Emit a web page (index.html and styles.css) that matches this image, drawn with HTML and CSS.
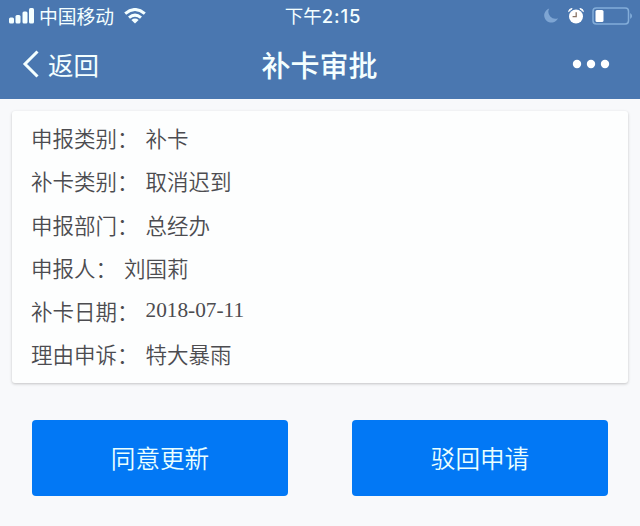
FILE: index.html
```
<!DOCTYPE html>
<html lang="zh-CN">
<head>
    <meta charset="utf-8">
    <title>补卡审批</title>
    <link rel="stylesheet" href="styles.css">
</head>
<body>
    <header class="header">
        <div class="status-bar">
            <div class="status-left">
                <svg class="signal" width="26" height="16" viewBox="0 0 26 16" fill="#f4ffff">
                    <rect x="0" y="9.5" width="5" height="6" rx="1.5"/>
                    <rect x="6.5" y="7" width="5" height="8.5" rx="1.5"/>
                    <rect x="13.5" y="3.5" width="5" height="12" rx="1.5"/>
                    <rect x="20" y="0" width="5" height="15.5" rx="1.5"/>
                </svg>
                <span class="carrier">中国移动</span>
                <svg class="wifi" width="22" height="16" viewBox="0 0 22 16" fill="none" stroke="#f4ffff" stroke-width="3">
                    <path d="M1.2 5.6 Q11 -2.6 20.8 5.6"/>
                    <path d="M5 9.6 Q11 4.6 17 9.6"/>
                    <path d="M7.4 11.9 Q11 9.2 14.6 11.9 L11 15.4 Z" fill="#f4ffff" stroke="none"/>
                </svg>
            </div>
            <div class="status-time">下午<b>2:15</b></div>
            <div class="status-right">
                <svg class="moon" width="15" height="15" viewBox="0 0 15 15">
                    <path d="M5.2 .5 A7.2 7.2 0 1 0 14 10.2 A7 7 0 0 1 5.2 .5 Z" fill="#7ea5d3"/>
                </svg>
                <svg class="alarm" width="16" height="16" viewBox="0 0 16 16">
                    <g fill="#fff">
                        <circle cx="8" cy="8.5" r="7"/>
                        <path d="M.6 3.6 Q.9 .6 4.2 .6 Z M15.4 3.6 Q15.1 .6 11.8 .6 Z" stroke="#fff" stroke-width="1" stroke-linejoin="round"/>
                    </g>
                    <path d="M8.2 4.2 V8.6 H4.6" fill="none" stroke="#8a7465" stroke-width="1.3"/>
                </svg>
                <svg class="battery" width="41" height="18" viewBox="0 0 41 18">
                    <rect x="1" y="1" width="35.5" height="16" rx="3.2" fill="none" stroke="#83add9" stroke-width="1.5"/>
                    <rect x="3.5" y="3" width="8" height="12" rx="1.5" fill="#fff"/>
                    <path d="M38.2 6 Q42 9 38.2 12 Z" fill="#83add9"/>
                </svg>
            </div>
        </div>
        <nav class="nav-bar">
            <a class="back">
                <svg width="17" height="28" viewBox="0 0 17 28">
                    <path d="M15.5 1.5 L3 14 L15.5 26.5" fill="none" stroke="#f4ffff" stroke-width="3"/>
                </svg>
                <span>返回</span>
            </a>
            <h1 class="title">补卡审批</h1>
            <svg class="more" width="38" height="10" viewBox="0 0 38 10" fill="#fff">
                <circle cx="5" cy="5" r="4.2"/>
                <circle cx="19" cy="5" r="4.2"/>
                <circle cx="33" cy="5" r="4.2"/>
            </svg>
        </nav>
    </header>

    <main>
        <div class="card">
            <div class="row"><span class="label">申报类别：</span><span>补卡</span></div>
            <div class="row"><span class="label">补卡类别：</span><span>取消迟到</span></div>
            <div class="row"><span class="label">申报部门：</span><span>总经办</span></div>
            <div class="row"><span class="label">申报人：</span><span>刘国莉</span></div>
            <div class="row"><span class="label">补卡日期：</span><span class="date">2018-07-11</span></div>
            <div class="row"><span class="label">理由申诉：</span><span>特大暴雨</span></div>
        </div>
        <div class="actions">
            <button class="btn" type="button">同意更新</button>
            <button class="btn" type="button">驳回申请</button>
        </div>
    </main>
</body>
</html>
```
FILE: styles.css
```
* {
    box-sizing: border-box;
}
body {
    margin: 0;
    height: 526px;
    overflow: hidden;
    background-color: #f8f9fb;
    font-family: "Noto Sans CJK SC", sans-serif;
    color: #4c4c50;
}
.header {
    height: 99px;
    background-color: #4a77b0;
    color: #f4ffff;
}
.status-bar {
    display: grid;
    grid-template-columns: 1fr auto 1fr;
    align-items: center;
    height: 31px;
    padding: 0 7px 0 9px;
}
.status-left,
.status-right {
    display: flex;
    align-items: center;
}
.status-right {
    justify-content: flex-end;
}
.carrier {
    margin: 0 10px 0 4px;
    font-size: 18.8px;
    line-height: 30px;
}
.status-time {
    padding-left: 4px;
    font-size: 18.5px;
    line-height: 30px;
    white-space: nowrap;
}
.status-time b {
    font-family: Inter, sans-serif;
    font-weight: 500;
    font-size: 18.5px;
    letter-spacing: 0.8px;
}
.alarm {
    margin: 0 8px 0 9px;
}
.nav-bar {
    display: grid;
    grid-template-columns: 1fr auto 1fr;
    align-items: center;
    height: 66px;
    padding: 0 30px 0 22px;
}
.back {
    display: flex;
    align-items: center;
    gap: 9px;
    font-size: 25.5px;
    line-height: 64px;
}
.title {
    margin: 0;
    padding-left: 7px;
    font-size: 29px;
    font-weight: 500;
    line-height: 64px;
}
.more {
    justify-self: end;
}
.card {
    height: 272px;
    margin: 12px 12px 0;
    padding: 5px 19px;
    background-color: #fdfefe;
    border-radius: 3px;
    box-shadow: 0 1px 3px rgba(0, 0, 0, 0.22);
}
.row {
    display: flex;
    gap: 7px;
    height: 43.3px;
    font-size: 21.5px;
    font-weight: 350;
    line-height: 43.3px;
}
.date {
    font-family: "Liberation Serif", serif;
    font-size: 21.3px;
    font-weight: 400;
    line-height: 42px;
}
.actions {
    display: flex;
    gap: 64px;
    padding: 37px 32px 0;
}
.btn {
    flex: 1;
    height: 76px;
    padding: 0 0 3px;
    border: none;
    border-radius: 4px;
    background-color: #0278f5;
    color: #eaffff;
    font-family: inherit;
    font-size: 24.6px;
    font-weight: 350;
}
```
